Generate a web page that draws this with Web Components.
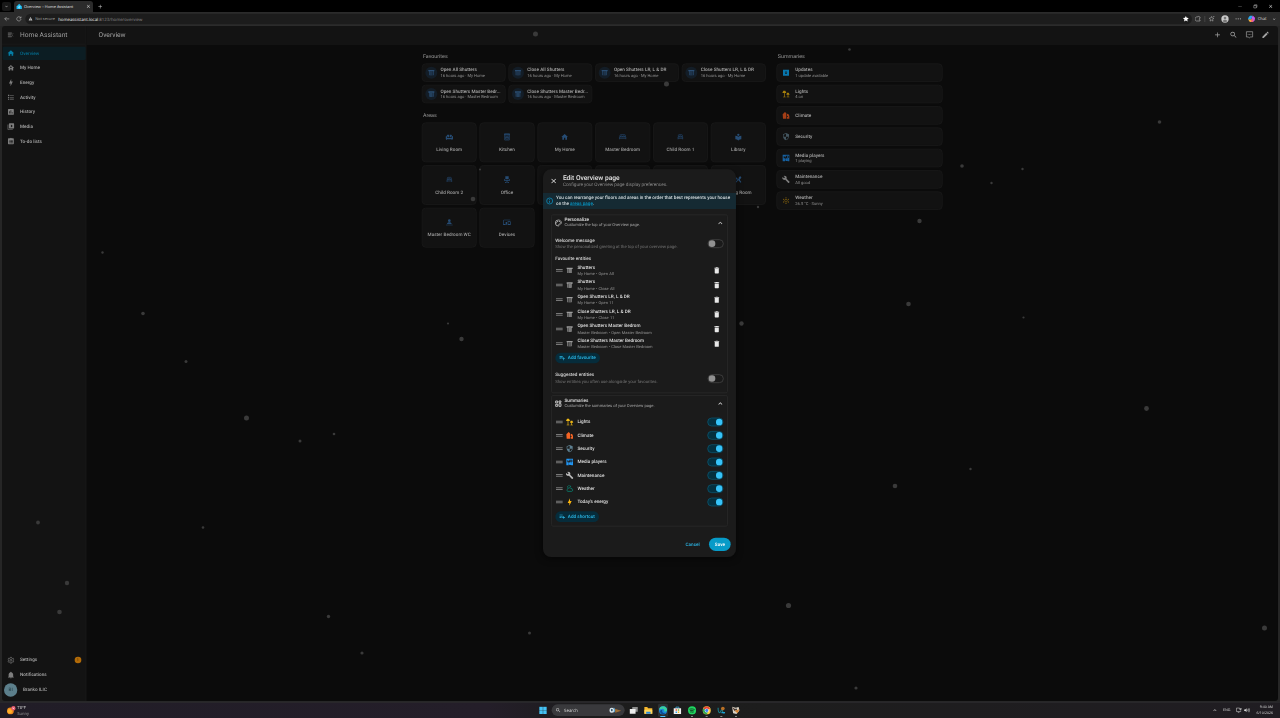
<!DOCTYPE html>
<html lang="en">
<head>
<meta charset="utf-8">
<title>Overview – Home Assistant</title>
<style>
    body {
        margin: 0;
        width: 1280px;
        height: 718px;
        overflow: hidden;
        background: #262626;
        font-family: Roboto, sans-serif;
        text-rendering: geometricPrecision;
    }
</style>
</head>
<body>
<desktop-screen></desktop-screen>

<script>
const ICONS = {
    home: '<path d="M10 20V14H14V20H19V12H22L12 3L2 12H5V20Z"/>',
    myhome: '<path fill-rule="evenodd" d="M10 20V16H14V20H19V12H22L12 3L2 12H5V20ZM12 8A2.500 2.500 0 1 1 12 13A2.500 2.500 0 1 1 12 8Z"/>',
    menu: '<path d="M3 5H16V7H3M3 11H13V13H3M3 17H16V19H3M21 7L16 12L21 17" fill="none" stroke="currentColor" stroke-width="1.8"/>',
    flash: '<path d="M11 15H6L13 1V9H18L11 23Z"/>',
    list: '<path d="M5 9.500L7.500 14H2.500ZM3 4H7V8H3ZM5 16A2 2 0 1 0 5 20A2 2 0 1 0 5 16M9 5V7H21V5ZM9 17V19H21V17ZM9 11V13H21V11Z"/>',
    chart: '<path fill-rule="evenodd" d="M5 3H19A2 2 0 0 1 21 5V19A2 2 0 0 1 19 21H5A2 2 0 0 1 3 19V5A2 2 0 0 1 5 3M7 10V17H9V10ZM11 7V17H13V7ZM15 13V17H17V13Z"/>',
    media: '<path fill-rule="evenodd" d="M4 6H2V20A2 2 0 0 0 4 22H18V20H4ZM20 2H8A2 2 0 0 0 6 4V16A2 2 0 0 0 8 18H20A2 2 0 0 0 22 16V4A2 2 0 0 0 20 2M12 14.500V5.500L18 10Z"/>',
    todo: '<path fill-rule="evenodd" d="M5 3H9.500A2.700 2.700 0 0 1 14.500 3H19A2 2 0 0 1 21 5V19A2 2 0 0 1 19 21H5A2 2 0 0 1 3 19V5A2 2 0 0 1 5 3M6 8V10H8V8ZM10 8V10H18V8ZM6 12V14H8V12ZM10 12V14H18V12ZM6 16V18H8V16ZM10 16V18H18V16Z"/>',
    cog: '<path fill="none" stroke="currentColor" stroke-width="2" stroke-linejoin="round" d="M10 3H14L14.500 5.700L16.500 6.800L19 5.800L21 9.200L19 11V13L21 14.800L19 18.200L16.500 17.200L14.500 18.300L14 21H10L9.500 18.300L7.500 17.200L5 18.200L3 14.800L5 13V11L3 9.200L5 5.800L7.500 6.800L9.500 5.700Z"/><circle cx="12" cy="12" r="3" fill="none" stroke="currentColor" stroke-width="2"/>',
    bell: '<path d="M21 19V20H3V19L5 17V11C5 7.900 7 5.200 10 4.300V4A2 2 0 0 1 14 4V4.300C17 5.200 19 7.900 19 11V17ZM14 21A2 2 0 0 1 10 21Z"/>',
    plus: '<path d="M19 13H13V19H11V13H5V11H11V5H13V11H19Z"/>',
    magnify: '<path d="M9.500 3A6.500 6.500 0 0 1 16 9.500C16 11.110 15.410 12.590 14.440 13.730L14.710 14H15.500L20.500 19L19 20.500L14 15.500V14.710L13.730 14.440A6.500 6.500 0 1 1 9.500 3M9.500 5A4.500 4.500 0 1 0 9.500 14A4.500 4.500 0 1 0 9.500 5Z"/>',
    assist: '<path d="M3 3H21V18H15L12 21L9 18H3Z" fill="none" stroke="currentColor" stroke-width="2"/><path d="M7 9.500H9V11.500H7ZM11 9.500H13V11.500H11ZM15 9.500H17V11.500H15Z"/>',
    pencil: '<path d="M20.710 7.040C21.100 6.650 21.100 6 20.710 5.630L18.370 3.290C18 2.900 17.350 2.900 16.960 3.290L15.120 5.120L18.870 8.870M3 17.250V21H6.750L17.810 9.930L14.060 6.180Z"/>',
    shutter: '<path d="M3 4H21V8H19V20H17V8H7V20H5V8H3ZM8 9H16V11H8ZM8 12H16V14H8ZM8 15H16V17H8ZM8 18H16V20H8Z"/>',
    sofa: '<path d="M6 5H11V13H6V10A3 3 0 0 0 4 8A3 3 0 0 1 6 5M13 5H18A3 3 0 0 1 20 8A3 3 0 0 0 18 10V13H13ZM1 11A2 2 0 0 1 5 11V15H19V11A2 2 0 0 1 23 11V17A2 2 0 0 1 21 19V21H19V19H5V21H3V19A2 2 0 0 1 1 17Z"/>',
    stove: '<path d="M5 3H19V21H5ZM5 9H19M8 6H9M12 6H13M15 6H16M8 12H16V18H8ZM8 13H16" fill="none" stroke="currentColor" stroke-width="2"/><path d="M3 2H21V5H3Z"/>',
    bedKing: '<path d="M4 12V7A2 2 0 0 1 6 5H18A2 2 0 0 1 20 7V12M6 12V9H11V12M13 12V9H18V12M2 19V12H22V19M2 16H22" fill="none" stroke="currentColor" stroke-width="1.800"/>',
    bed: '<path d="M6 12V7A2 2 0 0 1 8 5H16A2 2 0 0 1 18 7V12M9 12V9H15V12M5 19V12H19V19M5 16H19" fill="none" stroke="currentColor" stroke-width="1.800"/>',
    reader: '<circle cx="12" cy="5.500" r="3.500"/><path d="M12 11.500C9.600 9.300 6.500 8 3 8V19C6.500 19 9.600 20.300 12 22.500C14.400 20.300 17.500 19 21 19V8C17.500 8 14.400 9.300 12 11.500Z"/>',
    chair: '<path d="M7 2H17V11H7ZM3 10H5V13H19V10H21V15H13V18L18 20V22H16L12 20L8 22H6V20L11 18V15H3Z"/>',
    person: '<path d="M12 3A4 4 0 1 1 12 11A4 4 0 1 1 12 3M5 17C5 14 8 12 12 12S19 14 19 17ZM2 19H22V21H2Z"/>',
    devices: '<path d="M3 6H22V4H3A2 2 0 0 0 1 6V18H0V20H10V17H3ZM12 11H8V20H12ZM14 9H22A1 1 0 0 1 23 10V20H14ZM16 11V17H21V11Z" fill-rule="evenodd"/>',
    cutlery: '<path d="M4 3L11 10L8 13L4 8ZM14 11L20 5L21 6L16 12L21 19L19 21L12 14L5 21L3 19L13 9C12 6 15 3 18 2L21 5C20 8 17 11 14 11Z"/>',
    update: '<path fill-rule="evenodd" d="M3 3H21V21H3ZM11 7V12H8L12 17L16 12H13V7Z"/>',
    lamps: '<path d="M4 2H10L13 9H8V20H11V22H3V20H6V9H1ZM15 8H20L23 14H19V20H22V22H14V20H17V14H13Z"/>',
    climate: '<path d="M2 9L9 2L13 6V22H3ZM15 7C20 7 22 11 22 15V22H15V17H18V15H15Z"/>',
    shield: '<path fill-rule="evenodd" d="M12 1L3 5V11C3 16.550 6.840 21.730 12 23C17.160 21.730 21 16.550 21 11V5ZM12 3.200V12H19C18.470 16.110 15.720 19.780 12 20.920V12H5V6.300Z"/>',
    cast: '<path fill-rule="evenodd" d="M2 2H22V12H20V5H11V10H8V7H5V13H9V22H2ZM15 6H17V15A4 4 0 1 1 14 13H15ZM18 12H22V22H17Z"/>',
    wrench: '<path d="M22.700 19L13.600 9.900C14.500 7.600 14 4.900 12.100 3C10.100 1 7.100 .6 4.700 1.700L9 6L6 9L1.600 4.700C.4 7.100 .9 10.100 2.900 12.100C4.800 14 7.500 14.500 9.800 13.600L18.900 22.700C19.300 23.100 19.900 23.100 20.300 22.700L22.600 20.400C23.100 20 23.100 19.300 22.700 19Z"/>',
    sun: '<circle cx="12" cy="12" r="4" fill="none" stroke="currentColor" stroke-width="2"/><path d="M12 1L14.500 5H9.500ZM12 23L9.500 19H14.500ZM2.500 6.500L7.200 6.700L4.700 11ZM21.500 6.500L19.300 11L16.800 6.700ZM2.500 17.500L4.700 13L7.200 17.300ZM21.500 17.500L16.800 17.300L19.300 13Z"/>',
    cloudy: '<path d="M6 20A4 4 0 0 1 6 13A5.500 5.500 0 0 1 16 12A4 4 0 0 1 18 20ZM6 9A4 4 0 0 1 9 3M15 8A4 4 0 0 0 11 3" fill="none" stroke="currentColor" stroke-width="2.200"/>',
    close: '<path d="M19 6.410L17.590 5L12 10.590L6.410 5L5 6.410L10.590 12L5 17.590L6.410 19L12 13.410L17.590 19L19 17.590L13.410 12Z"/>',
    info: '<circle cx="12" cy="12" r="9" fill="none" stroke="currentColor" stroke-width="2"/><path d="M11 7H13V9H11ZM11 11H13V17H11Z"/>',
    palette: '<path d="M12 3A9 9 0 1 0 12 21C14 21 14.500 19 13.500 17.800C12.700 16 14 15 15.500 15H18A3.500 3.500 0 0 0 21 11C21 6.500 17 3 12 3Z" fill="none" stroke="currentColor" stroke-width="2"/><circle cx="7" cy="11.500" r="1.500"/><circle cx="10" cy="7.500" r="1.500"/><circle cx="15" cy="7.500" r="1.500"/><circle cx="18" cy="11" r="1.300"/>',
    dashboard: '<path d="M4 4H10V10H4ZM14 4H20V8H14ZM4 14H10V20H4ZM14 12H20V20H14Z" fill="none" stroke="currentColor" stroke-width="2.400"/>',
    up: '<path d="M7.410 15.410L12 10.830L16.590 15.410L18 14L12 8L6 14Z"/>',
    down: '<path d="M7.410 8.590L12 13.170L16.590 8.590L18 10L12 16L6 10Z"/>',
    drag: '<path d="M2 8H22V11H2ZM2 13H22V16H2Z"/>',
    trash: '<path d="M19 4H15.500L14.500 3H9.500L8.500 4H5V6H19ZM6 7V19A2 2 0 0 0 8 21H16A2 2 0 0 0 18 19V7Z"/>',
    playlist: '<path d="M3 16H10V14H3ZM18 14V10H16V14H12V16H16V20H18V16H22V14ZM14 6H3V8H14ZM14 10H3V12H14Z"/>',
    back: '<path d="M11 5L4 12L11 19M4 12H21" fill="none" stroke="currentColor" stroke-width="2"/>',
    reload: '<path d="M19 8A8 8 0 1 0 20 13M20 3V9H14" fill="none" stroke="currentColor" stroke-width="2"/>',
    warn: '<path fill-rule="evenodd" d="M12 2L23 21H1ZM11 9V15H13V9ZM11 17V19H13V17Z"/>',
    star: '<path d="M12 1L15.300 8.200L23 9L17.200 14.300L18.900 22L12 18L5.100 22L6.800 14.300L1 9L8.700 8.200Z"/>',
    starLine: '<path d="M12 3L14.700 9L21 9.700L16.200 14L17.600 20.500L12 17L6.400 20.500L7.800 14L3 9.700L9.300 9ZM17 3H23" fill="none" stroke="currentColor" stroke-width="1.800"/>',
    puzzle: '<path d="M5 5H10A3 3 0 0 1 16 5H19V10A3 3 0 0 0 19 16V20H5A8 8 0 0 1 5 5Z" fill="none" stroke="currentColor" stroke-width="2"/>',
    dots: '<circle cx="4" cy="12" r="2"/><circle cx="12" cy="12" r="2"/><circle cx="20" cy="12" r="2"/>',
    minimise: '<path d="M4 11H20V13H4Z"/>',
    restore: '<path d="M5 8H16V19H5ZM8 8V5H19V16H16" fill="none" stroke="currentColor" stroke-width="2"/>',
    copilot: '<path d="M8 3H15L11 14H2C2 10 4 5 8 3Z" fill="#2aa7ee"/><path d="M15 3C19 3 19 8 22 9C22 15 20 21 15 21L12 12Z" fill="#c65ae8"/><path d="M2 14H13L16 21H9C5 21 5 17 2 14Z" fill="#f4b13c"/><path d="M12 12L18 14L15 21H10Z" fill="#f3627a"/>',
    avatar: '<circle cx="12" cy="12" r="11" fill="#c9c9c9"/><circle cx="12" cy="9" r="4" fill="#777"/><path d="M5 19C6 13 18 13 19 19A10 10 0 0 1 5 19Z" fill="#777"/>',
    haLogo: '<path d="M12 2L22 12V21H2V12Z" fill="#18bcf2"/><path d="M12 20V9M12 17L8 13M12 15L16 11" stroke="#e9faff" stroke-width="2"/>',
    windows: '<path d="M1 1H11.500V11.500H1ZM12.500 1H23V11.500H12.500ZM1 12.500H11.500V23H1ZM12.500 12.500H23V23H12.500Z" fill="#45c3f5"/>',
    taskview: '<path d="M8 3H23V16H8Z" fill="#8f8f8f"/><path d="M1 8H17V21H1Z" fill="#ededed"/>',
    folder: '<path d="M1 3H9L11 6H23V21H1Z" fill="#f5b62c"/><path d="M1 10H23V21H1Z" fill="#ffd75e"/><path d="M6 16H18V21H6Z" fill="#2b8be0"/>',
    edge: '<circle cx="12" cy="12" r="11" fill="#1b87d6"/><path d="M1 11C2 4 7 1 12 1C19 1 23 6 23 11C23 15 19 16 15 15C17 10 13 7 9 8C5 8 2 10 1 11Z" fill="#38cfa0"/><path d="M10 12C8 16 12 21 19 19C13 26 3 21 4 14C5 11 8 10 10 12Z" fill="#0c4a94"/>',
    store: '<path d="M2 6H22V22H2Z" fill="#f2f2f2"/><path d="M8 6V3H16V6" fill="none" stroke="#45b8ef" stroke-width="2"/><path d="M7 9H11V13H7Z" fill="#ee5238"/><path d="M13 9H17V13H13Z" fill="#77b834"/><path d="M7 15H11V19H7Z" fill="#2ba4e8"/><path d="M13 15H17V19H13Z" fill="#f8b81e"/>',
    spotify: '<circle cx="12" cy="12" r="11" fill="#1ed760"/><path d="M5 9C10 7 15 8 19 10M6 13C10 11.500 14 12 17 14M7 16.500C10 15.500 13 16 15.500 17.500" fill="none" stroke="#102016" stroke-width="2"/>',
    chrome: '<circle cx="12" cy="12" r="11" fill="#ffcd40"/><path d="M12 12L2.500 6.500A11 11 0 0 1 21.500 6.500Z" fill="#e94235"/><path d="M12 12L2.500 6.500A11 11 0 0 0 12 23L16 14Z" fill="#33a853"/><circle cx="12" cy="12" r="5.500" fill="#fff"/><circle cx="12" cy="12" r="4.200" fill="#4285f4"/>',
    pulse: '<path d="M3 5C3 12 4 18 7 18C10 18 11 10 13 10C16 10 14 20 20 20" fill="none" stroke="#187f8d" stroke-width="3"/><circle cx="16" cy="7" r="5" fill="#b96f24"/><path d="M12 18H22" stroke="#1c9fd1" stroke-width="3"/>',
    brush: '<path d="M2 2L12 5L20 3L22 13L14 22L5 20Z" fill="#d9d1c4"/><path d="M2 3L13 10L9 14Z" fill="#4b342b"/><path d="M9 13L22 9L17 20Z" fill="#d78332"/><circle cx="13" cy="9" r="2.500" fill="#343434"/>',
    weather: '<circle cx="10" cy="14" r="9" fill="#f28a1d"/><circle cx="8" cy="15" r="6" fill="#ffb22c"/><circle cx="18" cy="7" r="6" fill="#e5576c"/><path d="M16 5L20 9M20 5L16 9" stroke="#fff" stroke-width="1.500"/>',
    football: '<circle cx="5" cy="12" r="5" fill="#dce8ef"/><path d="M3 11L5 9L7 11L6 14H4Z" fill="#23455b"/><path d="M9 6L13 12L9 17Z" fill="#5fa8d3"/><path d="M11 9L24 13L12 17Z" fill="#9a6b34"/>',
    monitor: '<path d="M15 4H3V17H19V13M8 21H14M18 4V12M21 4V9H15V4" fill="none" stroke="currentColor" stroke-width="2"/>',
    volume: '<path d="M2 9H6L11 5V19L6 15H2Z"/><path d="M14 9Q16 12 14 15M17 6Q21 12 17 18M20 4Q25 12 20 20" fill="none" stroke="currentColor" stroke-width="1.800"/>'
};

// Shared shadow root setup for all elements on the page
class BaseElement extends HTMLElement {
    connectedCallback() {
        if (this.shadowRoot) return;
        this.attachShadow({ mode: 'open' });
        this.shadowRoot.innerHTML = this.render();
    }
    attr(name) {
        return this.getAttribute(name) || '';
    }
}

class UiIcon extends BaseElement {
    render() {
        return `
            <style>
                :host { display: block; flex: none; width: 8px; height: 8px; }
                svg { display: block; width: 100%; height: 100%; fill: currentColor; }
            </style>
            <svg viewBox="0 0 24 24">${ICONS[this.attr('name')] || ''}</svg>
        `;
    }
}

class BrowserBar extends BaseElement {
    render() {
        return `
            <style>
                :host { display: block; height: 26px; color: #c4c4c4; font: 4.1px/6px "Open Sans", sans-serif; }
                ui-icon { width: 6.4px; height: 6.4px; }
                .tabs { display: flex; height: 12px; background: #000; align-items: center; box-sizing: border-box; padding: 1px 6.5px 0 2px; }
                .drop { display: grid; place-items: center; width: 9px; height: 9px; border-radius: 2px; background: #181818; margin-right: 3px; }
                .drop ui-icon { width: 5px; height: 5px; }
                .tab { display: flex; align-items: center; width: 79px; height: 11px; box-sizing: border-box; padding: 0 2px 0 2px; background: #2b2b2b; border-radius: 3px 3px 0 0; }
                .tab span { flex: 1; margin-left: 1.6px; color: #e0e0e0; font-size: 3.9px; }
                .tab .x, .win ui-icon { width: 5.4px; height: 5.4px; }
                .add { margin-left: 4px; }
                .win { margin-left: auto; display: flex; gap: 10px; color: #ccc; }
                .tools { display: flex; height: 14px; background: #2b2b2b; align-items: center; box-sizing: border-box; padding: 0 3px 0 3.8px; }
                .tools > ui-icon { margin-right: 5.6px; }
                .url { flex: 1; display: flex; align-items: center; height: 10.5px; border-radius: 6px; background: #1c1c1c; padding-left: 3px; box-sizing: border-box; }
                .url .w { width: 4.4px; height: 4.4px; margin-right: 2.6px; }
                .url span { font-size: 3.9px; color: #a4a4a4; }
                .url b { color: #f4f4f4; font-weight: 500; margin-left: 3.2px; font-size: 4.35px; }
                .url i { font-style: normal; color: #8c8c8c; font-size: 4.35px; }
                .url .fav { margin-left: auto; margin-right: 3px; color: #fff; }
                .right { display: flex; align-items: center; gap: 6px; margin: 0 .5px 0 3px; }
                .line { width: 1px; height: 6px; background: #444; margin: 0 -3px; }
                .right .av { width: 8px; height: 8px; }
                .chat { display: flex; align-items: center; gap: 2px; color: #ddd; }
                .chat ui-icon { width: 8.4px; height: 8.4px; }
                .chat .c { width: 5px; height: 5px; margin-left: 3px; }
            </style>
            <div class="tabs">
                <div class="drop"><ui-icon name="down"></ui-icon></div>
                <div class="tab"><ui-icon name="haLogo"></ui-icon><span>Overview – Home Assistant</span><ui-icon class="x" name="close"></ui-icon></div>
                <ui-icon class="add" name="plus"></ui-icon>
                <div class="win"><ui-icon name="minimise"></ui-icon><ui-icon name="restore"></ui-icon><ui-icon name="close"></ui-icon></div>
            </div>
            <div class="tools">
                <ui-icon name="back"></ui-icon><ui-icon name="reload" style="margin-right:3px"></ui-icon>
                <div class="url"><ui-icon class="w" name="warn"></ui-icon><span>Not secure</span><b>homeassistant.local</b><i>:8123/home/overview</i><ui-icon class="fav" name="star"></ui-icon></div>
                <div class="right">
                    <ui-icon name="puzzle"></ui-icon><div class="line"></div><ui-icon name="starLine"></ui-icon><ui-icon class="av" name="avatar"></ui-icon><ui-icon name="dots"></ui-icon>
                    <div class="chat"><ui-icon name="copilot"></ui-icon>Chat<ui-icon class="c" name="down"></ui-icon></div>
                </div>
            </div>
        `;
    }
}

class NavItem extends BaseElement {
    render() {
        return `
            <style>
                :host { display: flex; align-items: center; height: 13.33px; margin: 0 0 1.33px .6px; padding: 0 4.4px 0 4.3px; width: 83px; box-sizing: border-box; border-radius: 1.3px; color: #a6a6a6; font-size: 4.67px; font-weight: 500; }
                :host([active]) { background: #0c1d23; color: #046c8e; }
                ui-icon { width: 7.8px; height: 7.8px; margin-right: 5.3px; color: #7e7e7e; }
                :host([active]) ui-icon { color: #047da5; }
                ::slotted(*) { margin-left: auto; }
            </style>
            <ui-icon name="${this.attr('icon')}"></ui-icon><span>${this.attr('label')}</span><slot></slot>
        `;
    }
}

class SideBar extends BaseElement {
    render() {
        return `
            <style>
                :host { display: flex; flex-direction: column; width: 84.4px; background: #131313; border-right: 1px solid #171717; box-sizing: border-box; }
                header { display: flex; align-items: center; height: 18.67px; box-sizing: border-box; border-bottom: 1px solid #191919; padding-left: 5px; gap: 6px; color: #9e9e9e; font-size: 6.67px; margin-bottom: 2px; flex: none; }
                header ui-icon { width: 7px; height: 7px; color: #757575; }
                .end { margin-top: auto; padding-bottom: 3.6px; }
                .badge { display: grid; place-items: center; width: 6.6px; height: 6.6px; border-radius: 50%; background: #b36b08; color: #4b300a; font-size: 3.7px; }
                .user { display: flex; align-items: center; height: 14.67px; padding-left: 1.9px; gap: 5.5px; color: #a6a6a6; font-size: 4.67px; font-weight: 500; }
                .user i { display: grid; place-items: center; width: 13.5px; height: 13.5px; border-radius: 50%; background: #5c7f8b; color: #1d343d; font-style: normal; font-weight: 400; }
            </style>
            <header><ui-icon name="menu"></ui-icon>Home Assistant</header>
            <nav-item active icon="home" label="Overview"></nav-item>
            <nav-item icon="myhome" label="My Home"></nav-item>
            <nav-item icon="flash" label="Energy"></nav-item>
            <nav-item icon="list" label="Activity"></nav-item>
            <nav-item icon="chart" label="History"></nav-item>
            <nav-item icon="media" label="Media"></nav-item>
            <nav-item icon="todo" label="To-do lists"></nav-item>
            <div class="end">
                <nav-item icon="cog" label="Settings"><span class="badge">1</span></nav-item>
                <nav-item icon="bell" label="Notifications"></nav-item>
                <div class="user"><i>BI</i>Branko ILIC</div>
            </div>
        `;
    }
}

class TileCard extends BaseElement {
    render() {
        return `
            <style>
                :host { display: flex; align-items: center; height: 18.67px; box-sizing: border-box; padding: 0 2.6px; gap: 3.3px; min-width: 0; background: #121212; border: 1px solid #171717; border-radius: 4px; color: #a6a6a6; font-size: 4.67px; }
                .icon { display: grid; place-items: center; flex: none; width: 12px; height: 12px; border-radius: 50%; color: ${this.attr('color') || '#2a4d72'}; background: ${this.hasAttribute('color') ? 'none' : '#131d27'}; }
                ui-icon { width: 8px; height: 8px; }
                .name { font-weight: 500; line-height: 6.67px; white-space: nowrap; }
                .sub { font-size: 4.1px; line-height: 5.6px; color: #929292; white-space: nowrap; }
            </style>
            <div class="icon"><ui-icon name="${this.attr('icon') || 'shutter'}"></ui-icon></div>
            <div class="text"><div class="name">${this.attr('name')}</div>${this.hasAttribute('sub') ? `<div class="sub">${this.attr('sub')}</div>` : ''}</div>
        `;
    }
}

class AreaCard extends BaseElement {
    render() {
        return `
            <style>
                :host { display: flex; flex-direction: column; align-items: center; height: 40px; box-sizing: border-box; padding-top: 9.6px; gap: 5.4px; background: #121212; border: 1px solid #171717; border-radius: 4px; color: #9a9a9a; font-size: 4.67px; line-height: 6.67px; font-weight: 500; white-space: nowrap; }
                ui-icon { color: #264c74; width: 8px; height: 8px; }
            </style>
            <ui-icon name="${this.attr('icon')}"></ui-icon><span>${this.attr('name')}</span>
        `;
    }
}

class OverviewPage extends BaseElement {
    render() {
        const favs = [
            ['Open All Shutters', 'My Home'], ['Close All Shutters', 'My Home'],
            ['Open Shutters LR, L &amp; DR', 'My Home'], ['Close Shutters LR, L &amp; DR', 'My Home'],
            ['Open Shutters Master Bedr...', 'Master Bedroom'], ['Close Shutters Master Bedr...', 'Master Bedroom']
        ];
        const areas = [
            ['sofa', 'Living Room'], ['stove', 'Kitchen'], ['home', 'My Home'], ['bedKing', 'Master Bedroom'], ['bed', 'Child Room 1'], ['reader', 'Library'],
            ['bed', 'Child Room 2'], ['chair', 'Office'], ['', ''], ['', ''], ['', ''], ['cutlery', 'Dining Room'],
            ['person', 'Master Bedroom WC'], ['devices', 'Devices']
        ];
        return `
            <style>
                :host { display: block; flex: 1; min-width: 0; background: #0b0b0b; }
                header { display: flex; align-items: center; height: 18.67px; box-sizing: border-box; background: #131313; border-bottom: 1px solid #171717; padding: 0 8.4px 0 12.2px; gap: 7.6px; color: #a2a2a2; font-size: 6.67px; }
                header span { flex: 1; }
                header ui-icon { width: 8.4px; height: 8.4px; }
                .cols { display: flex; justify-content: center; gap: 10.5px; padding-top: 7.7px; }
                .main { width: 344.3px; }
                .side { width: 166.4px; display: grid; gap: 2.67px; align-content: start; }
                h2 { margin: 0; padding-left: 1.4px; height: 11px; font-size: 5.33px; line-height: 7px; font-weight: 400; color: #989898; box-sizing: border-box; }
                .side h2 { height: 8.33px; }
                .favs { display: grid; grid-template-columns: repeat(4, minmax(0, 1fr)); gap: 2.67px; margin-bottom: 8px; }
                .areas { display: grid; grid-template-columns: repeat(6, minmax(0, 1fr)); gap: 2.67px; }
            </style>
            <header><span>Overview</span><ui-icon name="plus"></ui-icon><ui-icon name="magnify"></ui-icon><ui-icon name="assist"></ui-icon><ui-icon name="pencil"></ui-icon></header>
            <div class="cols">
                <div class="main">
                    <h2>Favourites</h2>
                    <div class="favs">${favs.map(f => `<tile-card name="${f[0]}" sub="16 hours ago · ${f[1]}"></tile-card>`).join('')}</div>
                    <h2>Areas</h2>
                    <div class="areas">${areas.map(a => `<area-card icon="${a[0]}" name="${a[1]}"></area-card>`).join('')}</div>
                </div>
                <div class="side">
                    <h2>Summaries</h2>
                    <tile-card icon="update" color="#0877ae" name="Updates" sub="1 update available"></tile-card>
                    <tile-card icon="lamps" color="#a9810b" name="Lights" sub="4 on"></tile-card>
                    <tile-card icon="climate" color="#a43e16" name="Climate"></tile-card>
                    <tile-card icon="shield" color="#42545e" name="Security"></tile-card>
                    <tile-card icon="cast" color="#1761a1" name="Media players" sub="1 playing"></tile-card>
                    <tile-card icon="wrench" color="#7d7d7d" name="Maintenance" sub="All good"></tile-card>
                    <tile-card icon="sun" color="#82600e" name="Weather" sub="26.5 °C · Sunny"></tile-card>
                </div>
            </div>
        `;
    }
}

// Snowflakes drifting over the page, [x, y, radius] on a free canvas
class SnowLayer extends BaseElement {
    render() {
        const flakes = [
            [535.5, 34, 2.5], [849.5, 49.5, 1.3], [666.5, 84, 2.5], [1159.5, 122, 1.8], [962, 166, 1.8], [1022.5, 169, 1.2], [991.5, 183, 1.2],
            [919.5, 221, 2.2], [758, 207, 1.2], [480, 169.5, 1.1], [473, 199, 2.3], [102.5, 252.5, 1.2], [143, 313.5, 1.8], [448, 323.5, 1.1],
            [461.5, 339, 2.2], [186, 361.5, 1.5], [741.5, 323.5, 2.2], [908.5, 304, 2.3], [1023.5, 317.5, 1.1], [246.5, 418, 2.5], [300, 441, 1.5],
            [334, 434, 1.3], [1146.5, 408.5, 2.4], [970.5, 469, 1.2], [895, 486, 2.3], [38, 522.5, 1.9], [203, 527.5, 1.3], [67, 583, 2.2],
            [59.5, 612, 2.3], [328.5, 616.5, 1.7], [529.5, 633, 1.5], [362, 653, 1.6], [788.5, 605.5, 2.6], [1264.5, 628, 2.5], [856, 688, 1.6]
        ];
        return `
            <style>
                :host { position: absolute; inset: 0; pointer-events: none; }
                svg { display: block; width: 100%; height: 100%; }
            </style>
            <svg viewBox="0 0 1280 718" fill="#3a3a3a">${flakes.map(f => `<circle cx="${f[0]}" cy="${f[1]}" r="${f[2]}"/>`).join('')}</svg>
        `;
    }
}

class UiSwitch extends BaseElement {
    render() {
        return `
            <style>
                :host { display: flex; align-items: center; flex: none; width: 16px; height: 8.6px; box-sizing: border-box; border: .7px solid #4b4b4b; border-radius: 5px; padding: 0 .3px; background: #1a1a1a; }
                i { width: 6.5px; height: 6.5px; border-radius: 50%; background: #919191; }
                :host([on]) { background: #04303f; border-color: #0a5c78; justify-content: flex-end; }
                :host([on]) i { background: #37c3f8; }
            </style>
            <i></i>
        `;
    }
}

class EntityRow extends BaseElement {
    render() {
        return `
            <style>
                :host { display: flex; align-items: center; height: 14.67px; color: #dedede; font-size: 4.67px; font-weight: 500; padding-right: .3px; }
                :host([slim]) { height: 13.33px; }
                .drag { width: 8px; height: 8px; color: #777; margin-right: 2.4px; }
                .icon { width: 8px; height: 8px; color: ${this.attr('color') || '#9b9b9b'}; margin-right: 3.8px; }
                .text { flex: 1; line-height: 6.67px; white-space: nowrap; }
                .sub { font-size: 4px; line-height: 6px; font-weight: 400; color: #969696; word-spacing: .25px; }
            </style>
            <ui-icon class="drag" name="drag"></ui-icon>
            <ui-icon class="icon" name="${this.attr('icon') || 'shutter'}"></ui-icon>
            <div class="text">${this.attr('name')}${this.hasAttribute('sub') ? `<div class="sub">${this.attr('sub')}</div>` : ''}</div>
            <slot></slot>
        `;
    }
}

class ExpansionPanel extends BaseElement {
    render() {
        return `
            <style>
                :host { display: block; border: 1px solid #262626; border-radius: 2px; box-sizing: border-box; padding: 0 3.3px 0 3.2px; }
                header { display: flex; align-items: center; height: 15.2px; color: #e0e0e0; }
                header ui-icon { width: 8px; height: 8px; margin-right: 2.2px; margin-left: -.9px; }
                header .up { margin: 0 -.7px 0 0; }
                .t { flex: 1; font-size: 4.67px; line-height: 5.7px; font-weight: 500; }
                .t div { font-size: 4.1px; line-height: 5.2px; font-weight: 400; color: #a8a8a8; }
            </style>
            <header><ui-icon name="${this.attr('icon')}"></ui-icon><div class="t">${this.attr('name')}<div>${this.attr('sub')}</div></div><ui-icon class="up" name="up"></ui-icon></header>
            <slot></slot>
        `;
    }
}

class SettingRow extends BaseElement {
    render() {
        return `
            <style>
                :host { display: flex; align-items: center; justify-content: space-between; height: 14px; font-size: 4.67px; line-height: 7.2px; font-weight: 500; color: #d0d0d0; }
                .sub { font-size: 4.28px; line-height: 6.4px; font-weight: 400; color: #777; white-space: nowrap; }
            </style>
            <div>${this.attr('name')}<div class="sub">${this.attr('sub')}</div></div><ui-switch></ui-switch>
        `;
    }
}

class AddButton extends BaseElement {
    render() {
        return `
            <style>
                :host { display: flex; width: fit-content; align-items: center; height: 10.6px; box-sizing: border-box; border-radius: 6px; padding: 0 4.3px 0 3.6px; gap: 2px; background: #062c3b; color: #2ab8e8; font-size: 4.67px; font-weight: 500; }
                ui-icon { width: 7px; height: 7px; }
            </style>
            <ui-icon name="playlist"></ui-icon><slot></slot>
        `;
    }
}

class EditDialog extends BaseElement {
    render() {
        const favs = [
            ['Shutters', 'My Home • Open All'], ['Shutters', 'My Home • Close All'],
            ['Open Shutters LR, L &amp; DR', 'My Home • Open 11'], ['Close Shutters LR, L &amp; DR', 'My Home • Close 11'],
            ['Open Shutters Master Bedrom', 'Master Bedroom • Open Master Bedroom'],
            ['Close Shutters Master Bedroom', 'Master Bedroom • Close Master Bedroom']
        ];
        const summaries = [
            ['lamps', '#f3bb16', 'Lights'], ['climate', '#f46424', 'Climate'], ['shield', '#5d7f90', 'Security'], ['cast', '#2196f3', 'Media players'],
            ['wrench', '#b9b9b9', 'Maintenance'], ['cloudy', '#078f7c', 'Weather'], ['flash', '#fcb50c', 'Today\'s energy']
        ];
        return `
            <style>
                :host { display: flex; flex-direction: column; width: 193px; height: 387.6px; background: #1b1b1b; border-radius: 8px; box-shadow: 0 2px 6px rgba(0, 0, 0, .5); overflow: hidden; }
                .head { display: flex; align-items: center; height: 23.7px; flex: none; padding: 0 6.5px; gap: 5.4px; color: #e4e4e4; }
                .head div { font-size: 6.67px; line-height: 8px; font-weight: 500; }
                .head p { margin: 0; font-size: 4.67px; line-height: 6.6px; font-weight: 400; color: #8b8b8b; }
                .alert { display: flex; align-items: center; height: 16px; flex: none; background: #152a33; color: #d5dcdf; font-size: 4.64px; line-height: 5.6px; padding-left: 2.5px; gap: 2.5px; font-weight: 500; }
                .alert div { white-space: nowrap; }
                .alert ui-icon { color: #0b9bd1; }
                a { color: #0793c0; text-decoration: underline; }
                .body { padding: 5.3px 8px 0; flex: 1; }
                h3 { margin: 5.2px 0 1.2px; font-size: 4.67px; line-height: 6px; font-weight: 500; color: #d0d0d0; }
                .first { height: 179px; margin-bottom: 1.8px; }
                .second { height: 131.6px; }
                .first setting-row { margin-top: 6.2px; }
                .first .s { margin-top: 8.3px; }
                .trash { width: 8.2px; height: 8.2px; margin-right: 2.4px; color: #e8e8e8; }
                .sums { padding: 4.1px 0 2.6px; }
                .first add-button { margin-top: 1.6px; }
                .foot { display: flex; align-items: center; justify-content: flex-end; height: 25.4px; flex: none; padding-right: 5.3px; gap: 9.3px; color: #2bb3e2; font-size: 4.67px; font-weight: 500; }
                .save { display: grid; place-items: center; width: 21.6px; height: 13.4px; border-radius: 7px; background: #079bc8; color: #fff; }
            </style>
            <div class="head"><ui-icon name="close"></ui-icon><div>Edit Overview page<p>Configure your Overview page display preferences.</p></div></div>
            <div class="alert"><ui-icon name="info"></ui-icon><div>You can rearrange your floors and areas in the order that best represents your house<br>on the <a>areas page</a>.</div></div>
            <div class="body">
                <expansion-panel class="first" icon="palette" name="Personalize" sub="Customize the top of your Overview page.">
                    <setting-row name="Welcome message" sub="Show the personalized greeting at the top of your overview page."></setting-row>
                    <h3>Favourite entities</h3>
                    ${favs.map(f => `<entity-row name="${f[0]}" sub="${f[1]}"><ui-icon class="trash" name="trash"></ui-icon></entity-row>`).join('')}
                    <add-button>Add favourite</add-button>
                    <setting-row class="s" name="Suggested entities" sub="Show entities you often use alongside your favourites."></setting-row>
                </expansion-panel>
                <expansion-panel class="second" icon="dashboard" name="Summaries" sub="Customize the summaries of your Overview page.">
                    <div class="sums">${summaries.map(s => `<entity-row slim icon="${s[0]}" color="${s[1]}" name="${s[2]}"><ui-switch on></ui-switch></entity-row>`).join('')}</div>
                    <add-button>Add shortcut</add-button>
                </expansion-panel>
            </div>
            <div class="foot"><span>Cancel</span><span class="save">Save</span></div>
        `;
    }
}

class TaskBar extends BaseElement {
    render() {
        const apps = ['taskview', 'folder', 'edge', 'store', 'spotify', 'chrome', 'pulse', 'brush'];
        return `
            <style>
                :host { display: grid; grid-template-columns: 1fr auto 1fr; align-items: center; height: 16.5px; box-sizing: border-box; background: linear-gradient(90deg, #211d27, #241e29 38%, #1c1c1c 46%, #1d1d1d 60%, #201d22); border-top: 1px solid #2c2a2f; color: #d8d8d8; font: 4.1px/6px "Open Sans", sans-serif; }
                .weather { display: flex; align-items: center; gap: 1.8px; padding-left: 6.5px; }
                .weather ui-icon { width: 9px; height: 9px; }
                .weather small { display: block; font-size: 4.1px; color: #9c9c9c; }
                .mid { display: flex; align-items: center; gap: 4.6px; }
                .mid > ui-icon { width: 8px; height: 8px; }
                .search { display: flex; align-items: center; width: 73px; height: 11.6px; box-sizing: border-box; border-radius: 6px; background: #39393c; padding: 0 3.5px; gap: 3px; font-size: 4.4px; margin-right: -.6px; }
                .search ui-icon { width: 5.8px; height: 5.8px; }
                .search .art { width: 12px; height: 12px; margin-left: auto; }
                .app { position: relative; width: 10px; height: 13px; display: grid; place-items: center; }
                .app ui-icon { width: 8.8px; height: 8.8px; }
                .run::after { content: ""; position: absolute; bottom: -.4px; left: 4px; width: 2px; height: 1px; background: #888; }
                .on { background: #2d3033; border-radius: 1.5px; }
                .on::after { left: 2.5px; width: 5px; background: #4cc2ff; }
                .tray { display: flex; align-items: center; justify-content: flex-end; padding-right: 7px; gap: 5px; font-size: 3.7px; }
                .tray ui-icon { width: 6.4px; height: 6.4px; }
                .net { display: flex; gap: 1.6px; }
                .clock { text-align: right; line-height: 5.9px; margin-left: 1.5px; font-size: 3.5px; }
            </style>
            <div class="weather"><ui-icon name="weather"></ui-icon><div>78°F<small>Sunny</small></div></div>
            <div class="mid">
                <ui-icon name="windows"></ui-icon>
                <div class="search"><ui-icon name="magnify"></ui-icon>Search<ui-icon class="art" name="football"></ui-icon></div>
                ${apps.map((a, i) => `<div class="app ${a === 'edge' ? 'run on' : i > 3 ? 'run' : ''}"><ui-icon name="${a}"></ui-icon></div>`).join('')}
            </div>
            <div class="tray"><ui-icon name="up"></ui-icon>ENG<div class="net"><ui-icon name="monitor"></ui-icon><ui-icon name="volume"></ui-icon></div><div class="clock">9:40 AM<br>6/10/2026</div></div>
        `;
    }
}

// Laid out at 3x and scaled back, so that the tiny type keeps its own metrics
class DesktopScreen extends BaseElement {
    render() {
        return `
            <style>
                :host { display: block; width: 1280px; height: 718px; overflow: hidden; }
                .screen { display: flex; flex-direction: column; position: relative; width: 1280px; height: 718px; zoom: 3; transform: scale(.333333); transform-origin: 0 0; }
                .page { display: flex; flex: 1; min-height: 0; margin: 0 2px .5px; border-radius: 3px; overflow: hidden; }
                .overlay { position: absolute; inset: 169.3px 1px 0 0; display: flex; justify-content: center; align-items: flex-start; }
            </style>
            <div class="screen">
                <browser-bar></browser-bar>
                <div class="page"><side-bar></side-bar><overview-page></overview-page></div>
                <task-bar></task-bar>
                <snow-layer></snow-layer>
                <div class="overlay"><edit-dialog></edit-dialog></div>
            </div>
        `;
    }
}

customElements.define('ui-icon', UiIcon);
customElements.define('browser-bar', BrowserBar);
customElements.define('nav-item', NavItem);
customElements.define('side-bar', SideBar);
customElements.define('tile-card', TileCard);
customElements.define('area-card', AreaCard);
customElements.define('overview-page', OverviewPage);
customElements.define('snow-layer', SnowLayer);
customElements.define('ui-switch', UiSwitch);
customElements.define('entity-row', EntityRow);
customElements.define('expansion-panel', ExpansionPanel);
customElements.define('setting-row', SettingRow);
customElements.define('add-button', AddButton);
customElements.define('edit-dialog', EditDialog);
customElements.define('task-bar', TaskBar);
customElements.define('desktop-screen', DesktopScreen);
</script>
</body>
</html>
